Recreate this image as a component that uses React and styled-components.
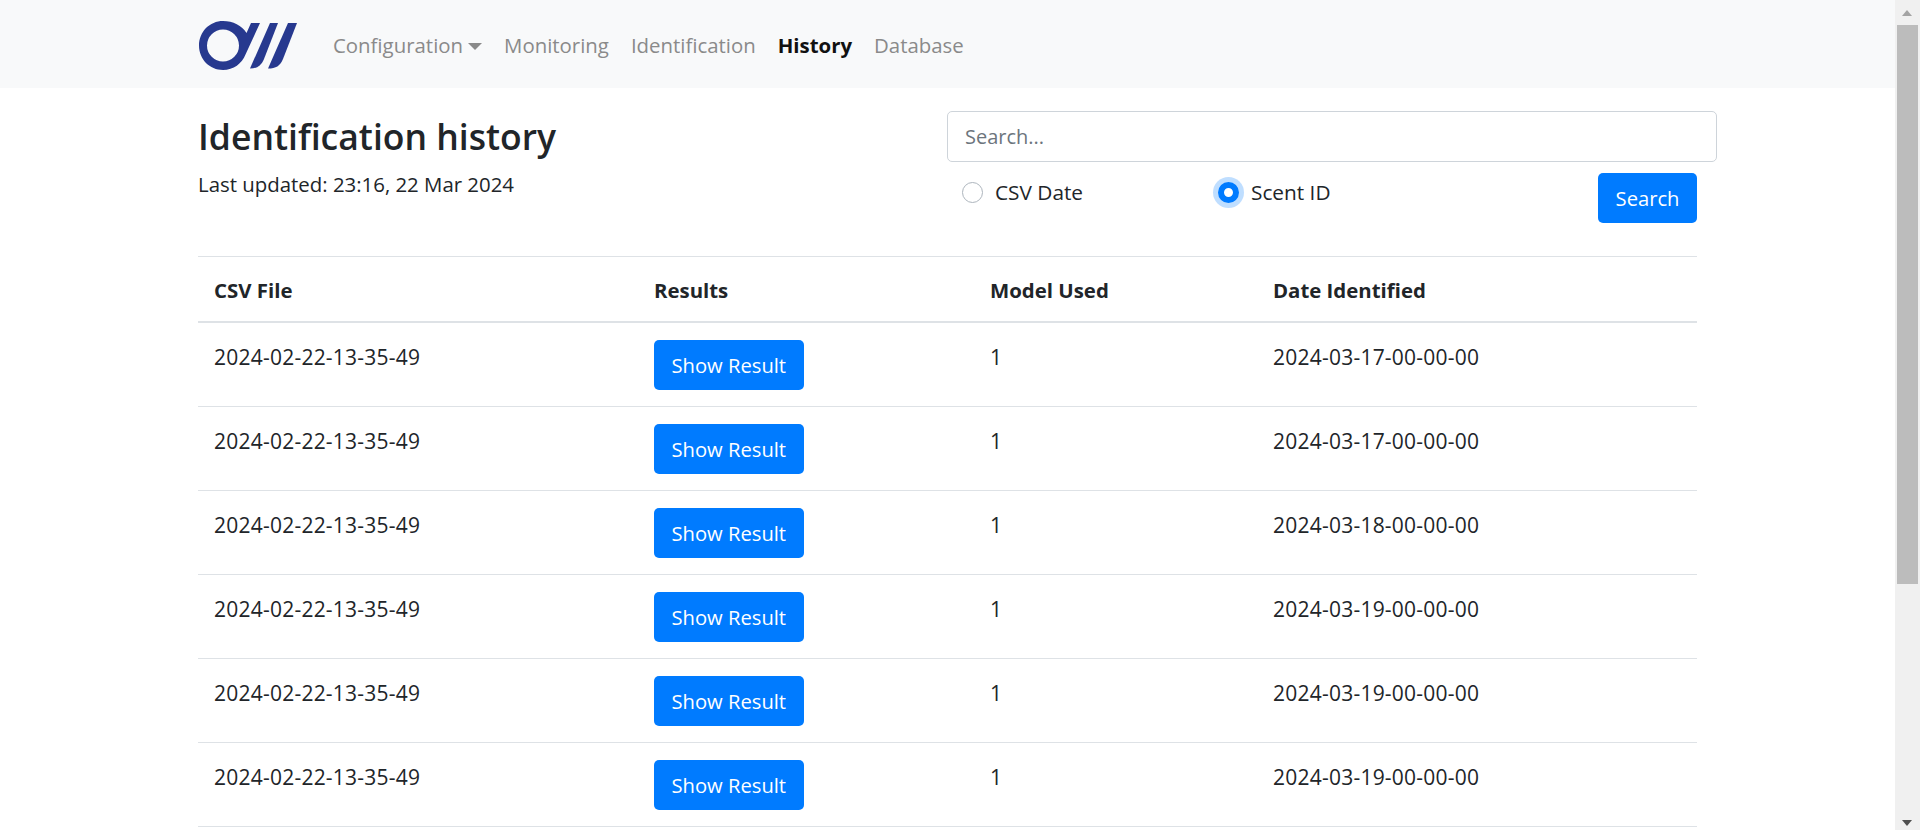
import React from "react"
import styled, { createGlobalStyle } from "styled-components"

const GlobalStyle = createGlobalStyle`
  html, body {
    margin: 0;
    padding: 0;
    height: 100%;
    overflow: hidden;
    background: #fff;
  }
  body {
    font-family: "Open Sans", "Noto Sans", sans-serif;
    font-size: 20px;
    color: #212529;
  }
`

const Page = styled.div`
  display: flex;
  height: 830px;
  overflow: hidden;
`

const Main = styled.div`
  flex: 1;
  min-width: 0;
`

const Navbar = styled.nav`
  display: flex;
  align-items: center;
  height: 88px;
  padding-left: 198px;
  padding-top: 2px;
  box-sizing: border-box;
  background: #f8f9fa;
`

const LogoMark = styled.svg`
  display: block;
  width: 98px;
  height: 49px;
  margin-left: 1px;
  margin-right: 36px;
`

const NavItem = styled.a`
  margin-right: 22px;
  color: ${props => (props.$active ? "#111" : "#8a8a8a")};
  font-weight: ${props => (props.$active ? 700 : 400)};
  font-size: 20.4px;
  white-space: nowrap;
`

const Caret = styled.span`
  display: inline-block;
  margin-left: 5px;
  vertical-align: 3px;
  border-top: 7px solid #8a8a8a;
  border-left: 7px solid transparent;
  border-right: 7px solid transparent;
`

const Container = styled.div`
  width: 1499px;
  margin-left: 198px;
`

const Header = styled.div`
  display: flex;
  justify-content: space-between;
  height: 168px;
  border-bottom: 1px solid #dee2e6;
`

const TitleBlock = styled.div`
  padding-top: 27px;
`

const Title = styled.h1`
  margin: 0;
  font-size: 35.5px;
  font-weight: 600;
  line-height: 43px;
  color: #212529;
`

const Updated = styled.p`
  margin: 12px 0 0;
  font-size: 20.4px;
  line-height: 28px;
`

const SearchBlock = styled.form`
  width: 770px;
  margin-top: 23px;
  margin-right: -20px;
`

const SearchInput = styled.input`
  display: block;
  box-sizing: border-box;
  width: 100%;
  height: 51px;
  padding: 0 17px;
  border: 1px solid #ced4da;
  border-radius: 5px;
  font: inherit;
  font-size: 20px;
  color: #495057;
  outline: none;

  &::placeholder {
    color: #6c757d;
  }
`

const OptionRow = styled.div`
  display: flex;
  align-items: flex-start;
  margin-top: 11px;
  padding-right: 20px;
`

const RadioLabel = styled.label`
  display: flex;
  align-items: center;
  width: ${props => props.$width}px;
  height: 38px;
  padding-left: 15px;
  box-sizing: border-box;
  font-size: 20.8px;
`

const RadioDot = styled.span`
  box-sizing: border-box;
  width: 21px;
  height: 21px;
  margin-right: 12px;
  border-radius: 50%;
  border: ${props => (props.$checked ? "6px solid #007bff" : "1px solid #adb5bd")};
  background: #fff;
  box-shadow: ${props => (props.$checked ? "0 0 0 5px rgba(0, 123, 255, 0.25)" : "none")};
`

const Button = styled.button`
  display: block;
  box-sizing: border-box;
  height: 50px;
  padding: 0 17.5px;
  border: 0;
  border-radius: 5px;
  background: #007bff;
  color: #fff;
  font: inherit;
  font-size: 20.2px;
  white-space: nowrap;
`

const PushRight = styled.div`
  margin-left: auto;
`

const Table = styled.table`
  width: 100%;
  border-collapse: collapse;
  table-layout: fixed;
`

const HeadCell = styled.th`
  width: ${props => props.$width}px;
  height: 65px;
  padding: 2px 16px 0;
  box-sizing: border-box;
  border-bottom: 2px solid #dee2e6;
  text-align: left;
  font-size: 20.4px;
  font-weight: 700;
`

const Row = styled.tr`
  border-bottom: 1px solid #dee2e6;
`

const Cell = styled.td`
  height: 84px;
  padding: 17px 16px 0;
  box-sizing: border-box;
  vertical-align: top;
  font-size: 21px;
  letter-spacing: 0.23px;
  line-height: 34px;
`

const rows = [
  ["2024-02-22-13-35-49", "1", "2024-03-17-00-00-00"],
  ["2024-02-22-13-35-49", "1", "2024-03-17-00-00-00"],
  ["2024-02-22-13-35-49", "1", "2024-03-18-00-00-00"],
  ["2024-02-22-13-35-49", "1", "2024-03-19-00-00-00"],
  ["2024-02-22-13-35-49", "1", "2024-03-19-00-00-00"],
  ["2024-02-22-13-35-49", "1", "2024-03-19-00-00-00"],
]

const Scrollbar = styled.div`
  position: relative;
  flex: 0 0 25px;
  background: #f0f0f0;
`

const ScrollArrow = styled.span`
  position: absolute;
  left: 7px;
  ${props => (props.$down ? "bottom: 4px;" : "top: 10px;")}
  border-left: 5.5px solid transparent;
  border-right: 5.5px solid transparent;
  ${props => (props.$down ? "border-top: 6px solid #505050;" : "border-bottom: 6px solid #a3a3a3;")}
`

const ScrollThumb = styled.div`
  position: absolute;
  top: 25px;
  left: 2px;
  width: 21px;
  height: 559px;
  background: #bcbcbc;
`

const Logo = () => (
  <LogoMark viewBox="0 0 98 49">
    <path
      fill="#27398f"
      fillRule="evenodd"
      d="M24 0C10.700 0 0 10.800 0 24.500S10.700 49 24 49c10.500 0 19-6.500 22.500-15.500L61 2h-9l-4.500 10C43 4.500 34 0 24 0zM24 8.500a16 16 0 1 1 0 32a16 16 0 1 1 0-32z"
    />
    <path fill="#27398f" d="M71 2h8L65 38c-3 7-7 9.500-14 9.500z" />
    <path fill="#27398f" d="M89 2h9L84 38c-3 7-7 9.500-15 9.500z" />
  </LogoMark>
)

const App = () => (
  <Page>
    <GlobalStyle />
    <Main>
      <Navbar>
        <Logo />
        <NavItem>
          Configuration
          <Caret />
        </NavItem>
        <NavItem>Monitoring</NavItem>
        <NavItem>Identification</NavItem>
        <NavItem $active>History</NavItem>
        <NavItem>Database</NavItem>
      </Navbar>
      <Container>
        <Header>
          <TitleBlock>
            <Title>Identification history</Title>
            <Updated>Last updated: 23:16, 22 Mar 2024</Updated>
          </TitleBlock>
          <SearchBlock>
            <SearchInput placeholder="Search..." />
            <OptionRow>
              <RadioLabel $width={256}>
                <RadioDot />
                CSV Date
              </RadioLabel>
              <RadioLabel $width={200}>
                <RadioDot $checked />
                Scent ID
              </RadioLabel>
              <PushRight>
                <Button type="button">Search</Button>
              </PushRight>
            </OptionRow>
          </SearchBlock>
        </Header>
        <Table>
          <thead>
            <tr>
              <HeadCell $width={440}>CSV File</HeadCell>
              <HeadCell $width={336}>Results</HeadCell>
              <HeadCell $width={283}>Model Used</HeadCell>
              <HeadCell $width={440}>Date Identified</HeadCell>
            </tr>
          </thead>
          <tbody>
            {rows.map((row, i) => (
              <Row key={i}>
                <Cell>{row[0]}</Cell>
                <Cell>
                  <Button type="button">Show Result</Button>
                </Cell>
                <Cell>{row[1]}</Cell>
                <Cell>{row[2]}</Cell>
              </Row>
            ))}
          </tbody>
        </Table>
      </Container>
    </Main>
    <Scrollbar>
      <ScrollArrow />
      <ScrollThumb />
      <ScrollArrow $down />
    </Scrollbar>
  </Page>
)

export default App
